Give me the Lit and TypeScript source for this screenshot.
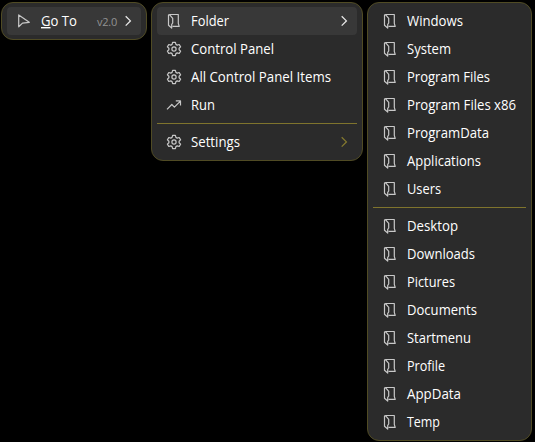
import { LitElement, html, css, svg, nothing } from "lit";
import { customElement, property } from "lit/decorators.js";

type Item = { label: string; icon: string; width: number; arrow?: boolean; active?: boolean; dim?: boolean; hint?: string; accel?: boolean };

const icons: Record<string, unknown> = {
  cursor: svg`<path d="M2.7 1.9V13.8L6.5 10.1L13.3 9.3Z"/>`,
  folder: svg`<path d="M3.5 1.5H12.3V10.4L13.2 13.4H6.6M3.5 1.5L2.5 2V12.3L5.7 15V11.3L6.7 10V5.3L3.5 1.7"/>`,
  gear: svg`<circle cx="8" cy="8" r="2.1"/><path d="M6.6 1.4H9.4L9.9 3.4L11.2 4.1L13.2 3.5L14.6 5.9L13.1 7.3V8.7L14.6 10.1L13.2 12.5L11.2 11.9L9.9 12.6L9.4 14.6H6.6L6.1 12.6L4.8 11.9L2.8 12.5L1.4 10.1L2.9 8.7V7.3L1.4 5.9L2.8 3.5L4.8 4.1L6.1 3.4Z"/>`,
  run: svg`<path d="M1 12.3L5.8 7.5L8.4 10.1L14.2 4.3M9.8 3.9H14.5V8.5"/>`,
};

@customElement("menu-panel")
class MenuPanel extends LitElement {
  @property({ attribute: false }) groups: Item[][] = [];

  static styles = css`
    :host {
      display: block;
      box-sizing: border-box;
      border: 1px solid #504b24;
      border-radius: 12px;
      background: #2b2b2b;
      padding: 4px 5px;
    }
    .row {
      display: flex;
      align-items: center;
      height: 28px;
      box-sizing: border-box;
      padding: 0 5px 0 9px;
      border-radius: 4px;
      color: #fff;
    }
    .active { background: #383838; }
    .icon {
      width: 16px;
      height: 16px;
      flex: none;
      margin-right: 9px;
      fill: none;
      stroke: #c8c8c8;
      stroke-width: 1.2;
      stroke-linejoin: round;
    }
    .label { flex: 1 1 0; width: 0; min-width: 0; height: 28px; overflow: visible; }
    .text { font: 14px "Open Sans", "Noto Sans", sans-serif; fill: #fff; }
    .accel { text-decoration: underline; text-underline-offset: 2px; }
    .hint { font: 11px "Open Sans", sans-serif; color: #929292; margin-right: 3px; letter-spacing: -0.25px; }
    .arrow { width: 16px; height: 16px; flex: none; fill: none; stroke: #e8e8e8; stroke-width: 1.3; }
    .dim { stroke: #84792f; }
    .sep { height: 1px; background: #7f742d; margin: 4px 0; }
  `;

  row(i: Item) {
    return html`<div class="row ${i.active ? "active" : ""}">
      <svg class="icon" viewBox="0 0 16 16">${icons[i.icon]}</svg>
      <svg class="label"><text class="text" x="0" y="19" textLength=${i.width} lengthAdjust="spacingAndGlyphs">${i.accel ? svg`<tspan class="accel">${i.label[0]}</tspan>${i.label.slice(1)}` : i.label}</text></svg>
      ${i.hint ? html`<span class="hint">${i.hint}</span>` : nothing}
      ${i.arrow ? html`<svg class="arrow ${i.dim ? "dim" : ""}" viewBox="0 0 16 16"><path d="M5.7 3.2L10.4 7.9L5.7 12.6"/></svg>` : nothing}
    </div>`;
  }

  render() {
    return this.groups.map((g, n) => html`${n ? html`<div class="sep"></div>` : nothing}${g.map((i) => this.row(i))}`);
  }
}

const folders = (list: [string, number][]): Item[] => list.map(([label, width]) => ({ label, width, icon: "folder" }));

@customElement("app-root")
class AppRoot extends LitElement {
  static styles = css`
    :host {
      display: grid;
      grid-template-columns: 146px 212px 165px;
      column-gap: 4px;
      align-items: start;
      box-sizing: border-box;
      width: 535px;
      height: 442px;
      padding: 2px 0 0 1px;
      background: #000;
      overflow: hidden;
    }
  `;

  root: Item[][] = [[{ label: "Go To", icon: "cursor", width: 36, hint: "v2.0", arrow: true, active: true, accel: true }]];
  goTo: Item[][] = [
    [
      { label: "Folder", icon: "folder", width: 38, arrow: true, active: true },
      { label: "Control Panel", icon: "gear", width: 83 },
      { label: "All Control Panel Items", icon: "gear", width: 140 },
      { label: "Run", icon: "run", width: 24 },
    ],
    [{ label: "Settings", icon: "gear", width: 49, arrow: true, dim: true }],
  ];
  folder: Item[][] = [
    folders([["Windows", 56], ["System", 44], ["Program Files", 83], ["Program Files x86", 109], ["ProgramData", 82], ["Applications", 74], ["Users", 34]]),
    folders([["Desktop", 51], ["Downloads", 68], ["Pictures", 48], ["Documents", 70], ["Startmenu", 64], ["Profile", 38], ["AppData", 54], ["Temp", 33]]),
  ];

  render() {
    return html`<menu-panel .groups=${this.root}></menu-panel>
      <menu-panel .groups=${this.goTo}></menu-panel>
      <menu-panel .groups=${this.folder}></menu-panel>`;
  }
}
